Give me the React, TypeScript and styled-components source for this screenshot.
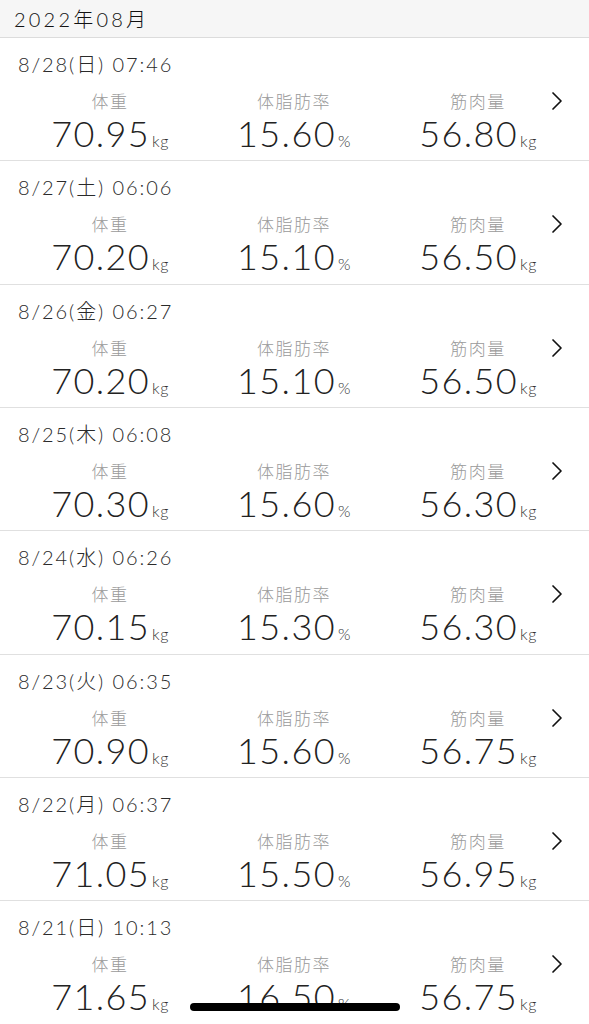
import React from "react";
import styled, { createGlobalStyle } from "styled-components";

const Global = createGlobalStyle`
  html, body { margin: 0; padding: 0; background: #fff; }
  body { font-family: "Lato", "Noto Sans CJK JP", sans-serif; color: #222; overflow: hidden; }
`;

const Page = styled.div`
  width: 589px;
  height: 1024px;
  overflow: hidden;
  position: relative;
  background: #fff;
`;

const Header = styled.div`
  height: 37px;
  display: flex;
  align-items: center;
  padding-left: 14px;
  background: #f6f6f6;
  border-bottom: 1px solid #dcdcdc;
  font-size: 20px;
  font-weight: 300;
  color: #111;
  letter-spacing: 3.2px;
`;

const Row = styled.div`
  position: relative;
  height: 122.33px;
  border-bottom: 1px solid #e0e0e0;
  box-sizing: content-box;
`;

const DateLine = styled.div`
  padding: 15px 0 0 18px;
  height: 23px;
  line-height: 23px;
  font-size: 20px;
  font-weight: 300;
  color: #2a2a2a;
  letter-spacing: 1.9px;
`;

const Metrics = styled.div`
  display: grid;
  grid-template-columns: 184px 184px 184px;
  padding-left: 18px;
  margin-top: 16px;
`;

const Metric = styled.div`
  display: flex;
  flex-direction: column;
  align-items: center;
`;

const Label = styled.div`
  font-size: 17px;
  line-height: 20px;
  font-weight: 300;
  color: #9a9a9a;
  letter-spacing: 1.5px;
`;

const ValueLine = styled.div`
  display: flex;
  align-items: baseline;
  margin-top: 1px;
`;

const Value = styled.span`
  font-size: 36px;
  font-weight: 300;
  line-height: 40px;
  color: #222;
  letter-spacing: 1.4px;
`;

const Unit = styled.span`
  font-size: 16px;
  font-weight: 300;
  color: #333;
  margin-left: 2px;
  letter-spacing: 0.5px;
`;

const Chevron = styled.svg`
  position: absolute;
  left: 550px;
  top: 53px;
`;

const HomeBar = styled.div`
  position: absolute;
  left: 190px;
  top: 1003px;
  width: 210px;
  height: 8px;
  border-radius: 4px;
  background: #000;
`;

type Entry = { date: string; w: string; f: string; m: string };

const entries: Entry[] = [
  { date: "8/28(日) 07:46", w: "70.95", f: "15.60", m: "56.80" },
  { date: "8/27(土) 06:06", w: "70.20", f: "15.10", m: "56.50" },
  { date: "8/26(金) 06:27", w: "70.20", f: "15.10", m: "56.50" },
  { date: "8/25(木) 06:08", w: "70.30", f: "15.60", m: "56.30" },
  { date: "8/24(水) 06:26", w: "70.15", f: "15.30", m: "56.30" },
  { date: "8/23(火) 06:35", w: "70.90", f: "15.60", m: "56.75" },
  { date: "8/22(月) 06:37", w: "71.05", f: "15.50", m: "56.95" },
  { date: "8/21(日) 10:13", w: "71.65", f: "16.50", m: "56.75" },
];

const ChevronIcon = () => (
  <Chevron width="14" height="20" viewBox="0 0 14 20">
    <polyline points="3,2 11,10 3,18" fill="none" stroke="#111" strokeWidth="1.7" strokeLinecap="round" strokeLinejoin="round" />
  </Chevron>
);

export default function App() {
  return (
    <Page>
      <Global />
      <Header>2022年08月</Header>
      {entries.map((e) => (
        <Row key={e.date}>
          <DateLine>{e.date}</DateLine>
          <Metrics>
            <Metric>
              <Label>体重</Label>
              <ValueLine>
                <Value>{e.w}</Value>
                <Unit>kg</Unit>
              </ValueLine>
            </Metric>
            <Metric>
              <Label>体脂肪率</Label>
              <ValueLine>
                <Value>{e.f}</Value>
                <Unit>%</Unit>
              </ValueLine>
            </Metric>
            <Metric>
              <Label>筋肉量</Label>
              <ValueLine>
                <Value>{e.m}</Value>
                <Unit>kg</Unit>
              </ValueLine>
            </Metric>
          </Metrics>
          <ChevronIcon />
        </Row>
      ))}
      <HomeBar />
    </Page>
  );
}
